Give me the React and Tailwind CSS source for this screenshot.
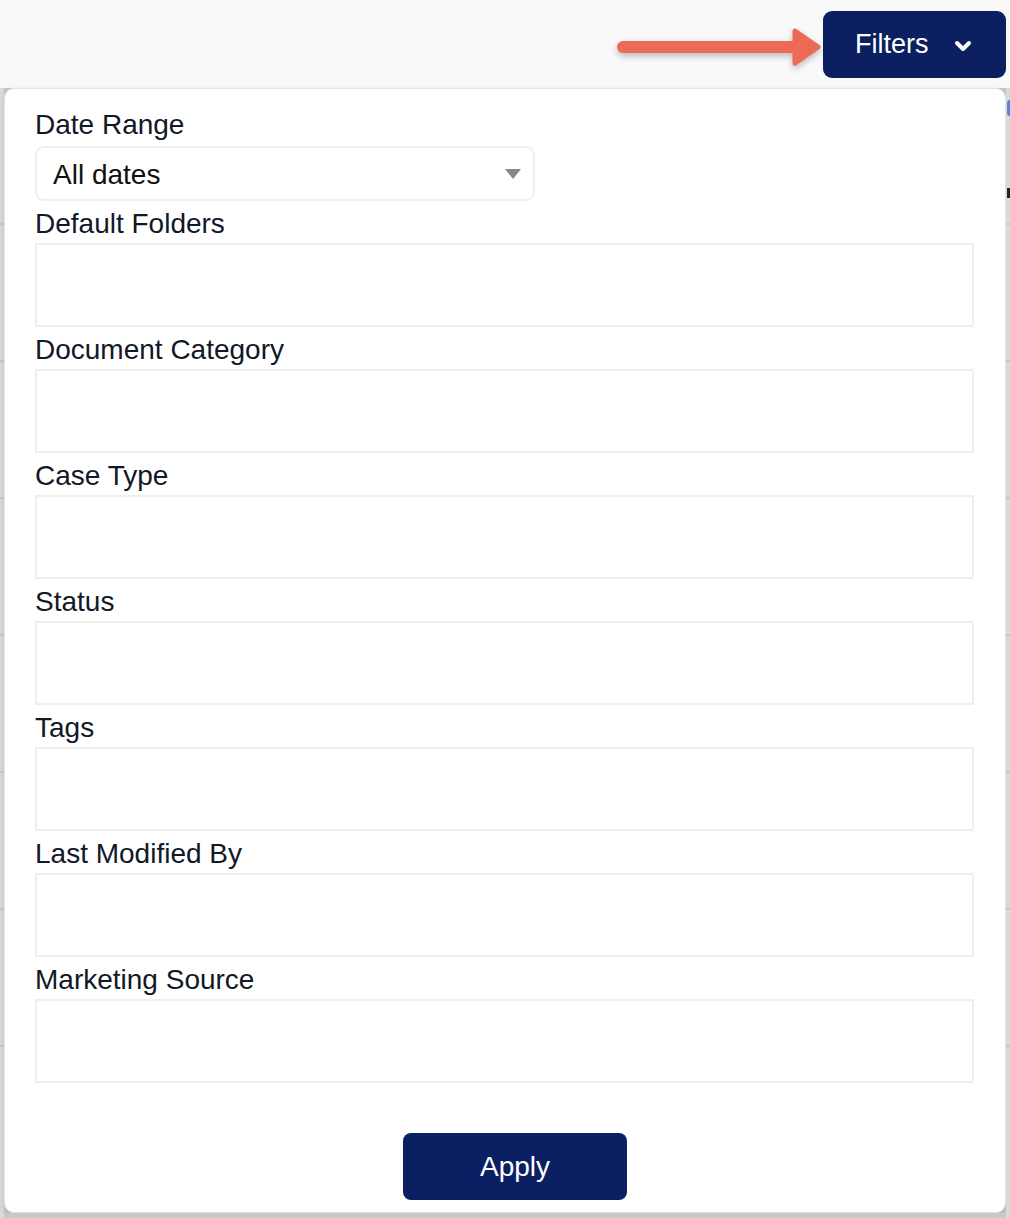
import React from 'react';

const fields = [
    'Default Folders',
    'Document Category',
    'Case Type',
    'Status',
    'Tags',
    'Last Modified By',
    'Marketing Source',
];

// faint table rows peeking out behind the panel
const SideStrip = ({ right }) => (
    <div className="w-[4px] flex flex-col bg-[#dadada]">
        {right ? (
            <>
                <div className="h-[12px]"></div>
                <div className="h-[16px] w-[3px] ml-[1px] rounded-l-full bg-[#5b86d6]"></div>
                <div className="h-[72px]"></div>
                <div className="h-[10px] w-[3px] ml-[1px] bg-[#222]"></div>
                <div className="h-[27px] border-b-2 border-[#c9c9c9]"></div>
            </>
        ) : (
            <div className="h-[137px] border-b-2 border-[#c9c9c9]"></div>
        )}
        {[0, 1, 2, 3, 4, 5].map((i) => (
            <div key={i} className="h-[137px] border-b-2 border-[#c9c9c9]"></div>
        ))}
        <div className="flex-1"></div>
    </div>
);

const Arrow = () => (
    <svg width="212" height="50" viewBox="0 0 212 50" className="drop-shadow-[0_3px_3px_rgba(0,0,0,0.25)]">
        <line x1="12" y1="27" x2="186" y2="27" stroke="#ec6a56" strokeWidth="12" strokeLinecap="round" />
        <path d="M184 11 L207 27 L184 43 Z" fill="#ec6a56" stroke="#ec6a56" strokeWidth="5" strokeLinejoin="round" />
    </svg>
);

const App = () => {
    return (
        <div className="w-[1010px] h-[1218px] flex flex-col bg-[#f9f9f9] overflow-hidden" style={{ fontFamily: '"Liberation Sans", Arial, Helvetica, sans-serif' }}>
            {/* header with the filters toggle */}
            <div className="h-[88px] flex justify-end items-start pt-[11px] pr-[4px]">
                <div className="h-[67px] flex items-center">
                    <Arrow />
                </div>
                <button className="h-[67px] w-[183px] rounded-[9px] bg-[#0b1f61] flex items-center pl-[32px] pr-[34px] text-white text-[27px]">
                    <span>Filters</span>
                    <svg width="18" height="12" viewBox="0 0 18 12" className="ml-auto mt-[3px]">
                        <path d="M3 3 L9 9 L15 3" fill="none" stroke="#fff" strokeWidth="4" strokeLinecap="round" strokeLinejoin="round" />
                    </svg>
                </button>
            </div>

            <div className="flex-1 flex bg-[#c8c8c8]">
                <SideStrip />
                <div className="flex-1 flex flex-col">
                    <div className="bg-white border border-[#e3e3e3] rounded-[10px] pt-[15px] pl-[30px] pr-[31px] pb-[12px] flex flex-col shadow-[0_2px_6px_rgba(0,0,0,0.12)]">
                        <label className="text-[28px] leading-[42px] text-[#111827]">Date Range</label>
                        <div className="h-[55px] w-[500px] rounded-[9px] border-2 border-[#efefef] flex items-center pl-[16px] pr-[12px] pt-[3px] text-[28px] text-[#111]">
                            <span>All dates</span>
                            <svg width="16" height="10" viewBox="0 0 16 10" className="ml-auto -mt-[3px]">
                                <path d="M0 0 L16 0 L8 10 Z" fill="#888" />
                            </svg>
                        </div>
                        {fields.map((f) => (
                            <div key={f} className="flex flex-col">
                                <label className="pt-[4px] text-[28px] leading-[38px] text-[#111827]">{f}</label>
                                <div className="h-[84px] border-2 border-[#efefef] bg-white"></div>
                            </div>
                        ))}
                        <button className="mt-[50px] ml-[368px] h-[67px] w-[224px] rounded-[8px] bg-[#0b2063] text-white text-[28px]">
                            Apply
                        </button>
                    </div>
                    <div className="flex-1 bg-[#c8c8c8]"></div>
                </div>
                <SideStrip right />
            </div>
        </div>
    );
};

export default App;
